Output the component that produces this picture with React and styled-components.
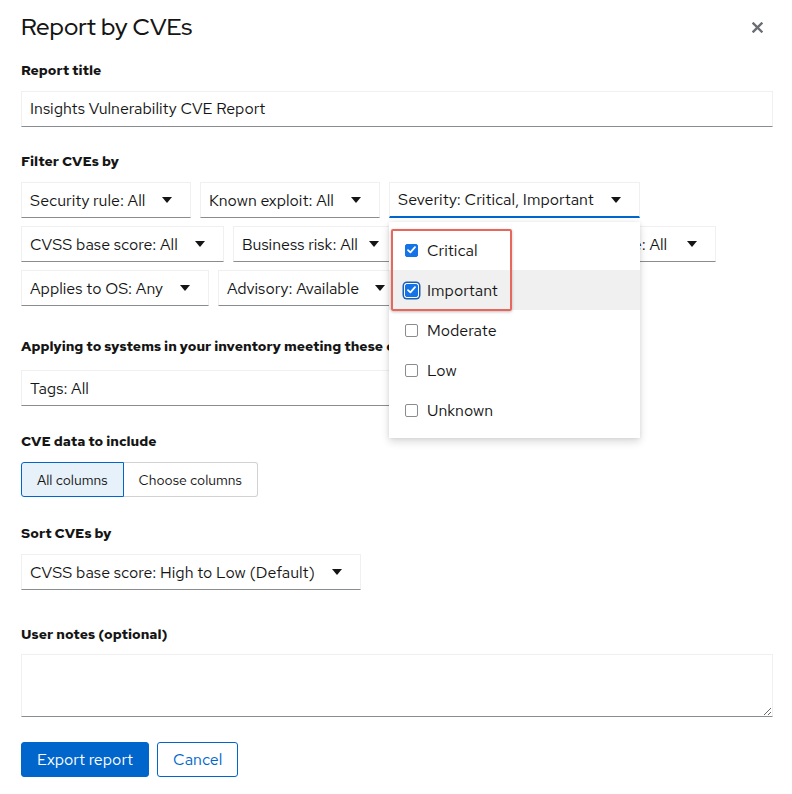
import React from 'react'
import styled, { createGlobalStyle, css } from 'styled-components'

const GlobalStyle = createGlobalStyle`
  html, body {
    margin: 0;
    padding: 0;
    background: #fff;
  }
  body {
    font-family: "Red Hat Text", Lato, "Liberation Sans", sans-serif;
    color: #151515;
  }
  * {
    box-sizing: border-box;
  }
`

const Caret = () => (
  <svg width="10" height="6" viewBox="0 0 10 6">
    <path d="M0 0 L10 0 L5 6 Z" fill="#151515" />
  </svg>
)

const Check = () => (
  <svg width="9" height="8" viewBox="0 0 9 8">
    <path d="M1 4.2 L3.4 6.4 L8 1.2" stroke="#fff" strokeWidth="1.8" fill="none" strokeLinecap="round" strokeLinejoin="round" />
  </svg>
)

const Select = ({ label, width, active, children }) => (
  <SelectWrap>
    <SelectToggle $width={width} $active={active}>
      <span>{label}</span>
      <Caret />
    </SelectToggle>
    {children}
  </SelectWrap>
)

const severities = [
  { name: 'Critical', checked: true },
  { name: 'Important', checked: true, focused: true, hovered: true },
  { name: 'Moderate' },
  { name: 'Low' },
  { name: 'Unknown' },
]

const App = () => (
  <Page>
    <GlobalStyle />
    <Header>
      <Title>Report by CVEs</Title>
      <CloseButton aria-label="Close">
        <svg width="11" height="11" viewBox="0 0 11 11">
          <path d="M1.5 1.5 L9.5 9.5 M9.5 1.5 L1.5 9.5" stroke="#6a6e73" strokeWidth="2.4" strokeLinecap="square" />
        </svg>
      </CloseButton>
    </Header>

    <Group $top={18}>
      <Label>Report title</Label>
      <TextInput defaultValue="Insights Vulnerability CVE Report" />
    </Group>

    <Group $top={24}>
      <Label>Filter CVEs by</Label>
      <Chips>
        <Select label="Security rule: All" width={170} />
        <Select label="Known exploit: All" width={180} />
        <Select label="Severity: Critical, Important" width={251} active>
          <Menu>
            {severities.map((s) => (
              <MenuItem key={s.name} $hovered={s.hovered}>
                <Box $checked={s.checked} $focused={s.focused}>
                  {s.checked && <Check />}
                </Box>
                {s.name}
              </MenuItem>
            ))}
            <Highlight />
          </Menu>
        </Select>
        <Select label="CVSS base score: All" width={203} />
        <Select label="Business risk: All" width={165} />
        <Select label="Status: All" width={129} />
        <Select label="Publish date: All" width={171} />
        <Select label="Applies to OS: Any" width={188} />
        <Select label="Advisory: Available" width={186} />
      </Chips>
    </Group>

    <Group $top={30}>
      <Label $gap={13}>Applying to systems in your inventory meeting these criteria</Label>
      <TagsField>Tags: All</TagsField>
    </Group>

    <Group $top={25}>
      <Label>CVE data to include</Label>
      <ToggleGroup>
        <ToggleItem $selected>All columns</ToggleItem>
        <ToggleItem>Choose columns</ToggleItem>
      </ToggleGroup>
    </Group>

    <Group $top={26}>
      <Label>Sort CVEs by</Label>
      <Select label="CVSS base score: High to Low (Default)" width={340} />
    </Group>

    <Group $top={34}>
      <Label $gap={9}>User notes (optional)</Label>
      <Notes />
    </Group>

    <Actions>
      <Button $primary>Export report</Button>
      <Button>Cancel</Button>
    </Actions>
  </Page>
)

const Page = styled.div`
  width: 792px;
  height: 794px;
  padding: 0 19px 0 21px;
  overflow: hidden;
`

const Header = styled.div`
  display: flex;
  align-items: center;
  justify-content: space-between;
  padding-top: 12px;
`

const Title = styled.h1`
  margin: 0;
  font-family: "Red Hat Display", Inter, Lato, sans-serif;
  font-size: 24px;
  line-height: 30px;
  font-weight: 500;
`

const CloseButton = styled.button`
  display: flex;
  align-items: center;
  justify-content: center;
  width: 30px;
  height: 30px;
  margin-right: 1px;
  padding: 0;
  border: none;
  background: transparent;
`

const Group = styled.div`
  display: flex;
  flex-direction: column;
  align-items: flex-start;
  margin-top: ${(p) => p.$top}px;
`

const Label = styled.label`
  font-size: 14px;
  line-height: 21px;
  font-weight: 700;
  margin-bottom: ${(p) => p.$gap ?? 10}px;
  white-space: nowrap;
`

const fieldBorder = css`
  border: 1px solid #f0f0f0;
  border-bottom-color: #8a8d90;
`

const TextInput = styled.input`
  ${fieldBorder}
  width: 100%;
  height: 36px;
  padding: 0 8px 2px;
  font: inherit;
  font-size: 16px;
  color: #151515;
  outline: none;
`

const Chips = styled.div`
  display: flex;
  flex-wrap: wrap;
  gap: 8px 9px;
  width: 752px;
`

const SelectWrap = styled.div`
  position: relative;
`

const SelectToggle = styled.div`
  ${fieldBorder}
  display: flex;
  align-items: center;
  justify-content: space-between;
  width: ${(p) => p.$width}px;
  height: 36px;
  padding: 0 18px 0 8px;
  font-size: 16px;
  white-space: nowrap;
  ${(p) => p.$active && css`
    border-bottom: 2px solid #0066cc;
  `}
`

const Menu = styled.div`
  position: absolute;
  top: 40px;
  left: 0;
  width: 100%;
  padding: 8px 0;
  background: #fff;
  box-shadow: 0 4px 8px rgba(3, 3, 3, 0.14), 0 0 4px rgba(3, 3, 3, 0.08);
  z-index: 10;
`

const MenuItem = styled.div`
  display: flex;
  align-items: center;
  gap: 9px;
  height: 40px;
  padding-left: 16px;
  font-size: 16px;
  background: ${(p) => (p.$hovered ? '#f0f0f0' : '#fff')};
`

const Box = styled.span`
  display: inline-flex;
  align-items: center;
  justify-content: center;
  width: 13px;
  height: 13px;
  border-radius: 2px;
  border: 1px solid ${(p) => (p.$checked ? '#1473e6' : '#8a8d90')};
  background: ${(p) => (p.$checked ? '#1473e6' : '#fff')};
  ${(p) => p.$focused && css`
    box-shadow: 0 0 0 1px #fff, 0 0 0 2.5px #1a5fb4;
  `}
`

const Highlight = styled.div`
  position: absolute;
  top: 7px;
  left: 2px;
  width: 121px;
  height: 82px;
  border: 2px solid #e8675c;
  border-radius: 2px;
  box-shadow: 0 1px 3px rgba(0, 0, 0, 0.25);
  pointer-events: none;
`

const TagsField = styled.div`
  ${fieldBorder}
  display: flex;
  align-items: center;
  width: 500px;
  height: 36px;
  padding: 0 8px;
  font-size: 16px;
`

const ToggleGroup = styled.div`
  display: flex;
`

const ToggleItem = styled.button`
  height: 35px;
  padding: 0 15px;
  font: inherit;
  font-size: 14px;
  color: #151515;
  background: ${(p) => (p.$selected ? '#e7f1fa' : '#fff')};
  border: 1px solid ${(p) => (p.$selected ? '#0066cc' : '#d2d2d2')};
  border-radius: ${(p) => (p.$selected ? '3px 0 0 3px' : '0 3px 3px 0')};
  ${(p) => !p.$selected && css`
    border-left: none;
  `}
`

const Notes = styled.textarea`
  ${fieldBorder}
  width: 100%;
  height: 63px;
  resize: vertical;
  font: inherit;
  outline: none;
`

const Actions = styled.div`
  display: flex;
  gap: 8px;
  margin-top: 25px;
`

const Button = styled.button`
  height: 35px;
  padding: 0 15px;
  border-radius: 3px;
  font: inherit;
  font-size: 16px;
  border: 1px solid #0066cc;
  color: ${(p) => (p.$primary ? '#fff' : '#0066cc')};
  background: ${(p) => (p.$primary ? '#0066cc' : '#fff')};
`

export default App
